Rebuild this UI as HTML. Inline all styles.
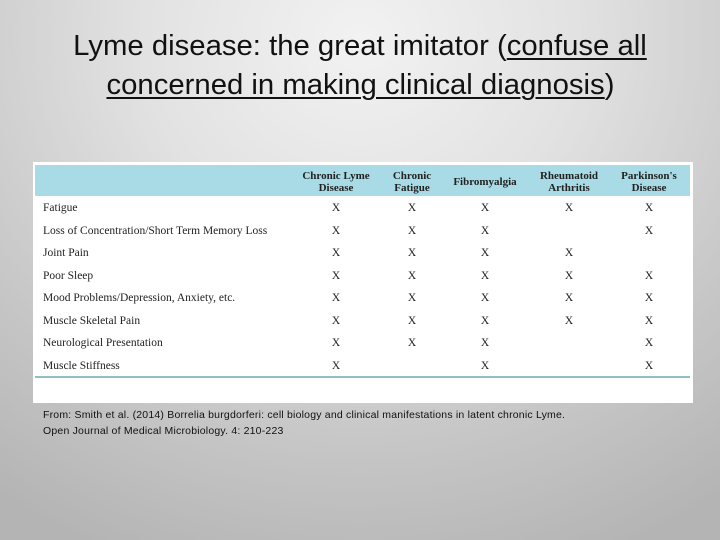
<!DOCTYPE html>
<html><head><meta charset="utf-8"><style>
*{margin:0;padding:0}
body{width:720px;height:540px;overflow:hidden;position:relative;
background:radial-gradient(ellipse 620px 560px at 360px 40px,#f2f2f2 0%,#e2e2e2 35%,#c8c8c8 70%,#b4b4b4 100%);
font-family:"Liberation Sans",sans-serif}
.t{position:absolute;left:0;width:720px;text-align:center;font-size:29px;color:#111;white-space:nowrap}
.t span.w{display:inline-block;transform:scaleX(1.01);transform-origin:center}
u{text-decoration-thickness:2px;text-underline-offset:3px}
#box{position:absolute;left:33px;top:162px;width:660px;height:241px;background:#fff}
#hd{position:absolute;left:35px;top:165px;width:655px;height:31px;background:#a8dbe6}
#bl{position:absolute;left:35px;top:376px;width:655px;height:2px;background:#8fc0c6}
.s{position:absolute;font-family:"Liberation Serif",serif;font-size:11.5px;color:#222;white-space:nowrap;line-height:12px}
.h{font-weight:bold;text-align:center;font-size:11px;transform:translateX(-50%);color:#222}
.x{transform:translateX(-50%)}
.c{position:absolute;left:43px;font-size:10.5px;color:#111;white-space:nowrap;letter-spacing:0.2px}
</style></head><body>
<div class="t" style="top:30px"><span class="w">Lyme disease: the great imitator (<u>confuse all</u></span></div>
<div class="t" style="top:69px"><span class="w"><u>concerned in making clinical diagnosis</u>)</span></div>
<div id="box"></div><div id="hd"></div><div id="bl"></div>
<div class="s h" style="left:336px;top:170px">Chronic Lyme<br>Disease</div>
<div class="s h" style="left:412px;top:170px">Chronic<br>Fatigue</div>
<div class="s h" style="left:485px;top:176px">Fibromyalgia</div>
<div class="s h" style="left:569px;top:170px">Rheumatoid<br>Arthritis</div>
<div class="s h" style="left:649px;top:170px">Parkinson's<br>Disease</div>

<div class="s" style="left:43px;top:202px">Fatigue</div>
<div class="s" style="left:43px;top:225px">Loss of Concentration/Short Term Memory Loss</div>
<div class="s" style="left:43px;top:247px">Joint Pain</div>
<div class="s" style="left:43px;top:270px">Poor Sleep</div>
<div class="s" style="left:43px;top:292px">Mood Problems/Depression, Anxiety, etc.</div>
<div class="s" style="left:43px;top:315px">Muscle Skeletal Pain</div>
<div class="s" style="left:43px;top:337px">Neurological Presentation</div>
<div class="s" style="left:43px;top:360px">Muscle Stiffness</div>

<div class="s x" style="left:336px;top:202px">X</div><div class="s x" style="left:412px;top:202px">X</div><div class="s x" style="left:485px;top:202px">X</div><div class="s x" style="left:569px;top:202px">X</div><div class="s x" style="left:649px;top:202px">X</div>
<div class="s x" style="left:336px;top:225px">X</div><div class="s x" style="left:412px;top:225px">X</div><div class="s x" style="left:485px;top:225px">X</div><div class="s x" style="left:649px;top:225px">X</div>
<div class="s x" style="left:336px;top:247px">X</div><div class="s x" style="left:412px;top:247px">X</div><div class="s x" style="left:485px;top:247px">X</div><div class="s x" style="left:569px;top:247px">X</div>
<div class="s x" style="left:336px;top:270px">X</div><div class="s x" style="left:412px;top:270px">X</div><div class="s x" style="left:485px;top:270px">X</div><div class="s x" style="left:569px;top:270px">X</div><div class="s x" style="left:649px;top:270px">X</div>
<div class="s x" style="left:336px;top:292px">X</div><div class="s x" style="left:412px;top:292px">X</div><div class="s x" style="left:485px;top:292px">X</div><div class="s x" style="left:569px;top:292px">X</div><div class="s x" style="left:649px;top:292px">X</div>
<div class="s x" style="left:336px;top:315px">X</div><div class="s x" style="left:412px;top:315px">X</div><div class="s x" style="left:485px;top:315px">X</div><div class="s x" style="left:569px;top:315px">X</div><div class="s x" style="left:649px;top:315px">X</div>
<div class="s x" style="left:336px;top:337px">X</div><div class="s x" style="left:412px;top:337px">X</div><div class="s x" style="left:485px;top:337px">X</div><div class="s x" style="left:649px;top:337px">X</div>
<div class="s x" style="left:336px;top:360px">X</div><div class="s x" style="left:485px;top:360px">X</div><div class="s x" style="left:649px;top:360px">X</div>

<div class="c" style="top:409px">From: Smith et al. (2014) Borrelia burgdorferi: cell biology and clinical manifestations in latent chronic Lyme.</div>
<div class="c" style="top:425px">Open Journal of Medical Microbiology. 4: 210-223</div>
</body></html>
